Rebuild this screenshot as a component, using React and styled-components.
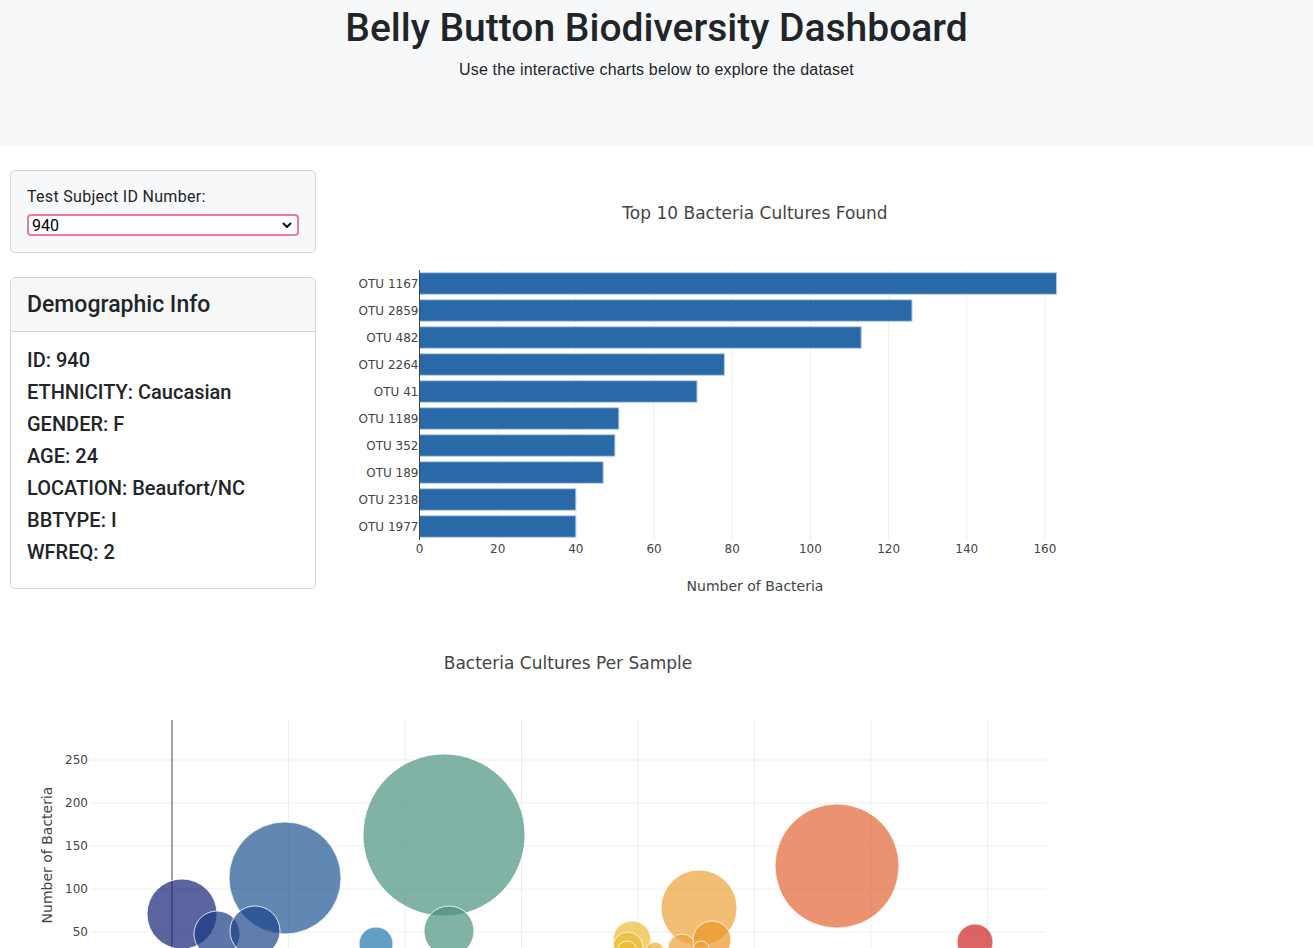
import React from 'react';
import styled, { createGlobalStyle } from 'styled-components';

const GlobalStyle = createGlobalStyle`
  * { box-sizing: border-box; }
  body {
    margin: 0;
    background: #fff;
    color: #212529;
    font-family: "Liberation Sans", Arial, sans-serif;
  }
`;

const headingFont = `Roboto, "Liberation Sans", Arial, sans-serif`;

const Jumbotron = styled.header`
  background: #f7f8f9;
  text-align: center;
  padding: 4px 0 48px;
`;

const Title = styled.h1`
  margin: 0 0 6px;
  font-family: ${headingFont};
  font-size: 39px;
  font-weight: 500;
  line-height: 48px;
  color: #212529;
`;

const Lead = styled.p`
  margin: 0 0 16px;
  font-size: 16px;
  line-height: 24px;
  letter-spacing: 0.18px;
`;

const Main = styled.main`
  padding: 24px 10px 0;
`;

const TopRow = styled.div`
  display: grid;
  grid-template-columns: 306px 830px;
  column-gap: 24px;
  align-items: start;
`;

const Sidebar = styled.div`
  display: flex;
  flex-direction: column;
  gap: 24px;
`;

const Well = styled.div`
  background: #f7f8f9;
  border: 1px solid #d4d4d4;
  border-radius: 5px;
  padding: 14px 16px 16px;
`;

const Label = styled.label`
  display: block;
  font-family: ${headingFont};
  font-size: 16px;
  line-height: 24px;
  letter-spacing: 0.3px;
  margin-bottom: 5px;
`;

const SelectWrap = styled.div`
  position: relative;
  width: 272px;
`;

const Select = styled.select`
  appearance: none;
  width: 100%;
  height: 22px;
  border: 2px solid #eb7aa6;
  border-radius: 4px;
  background: #fff;
  padding: 0 3px;
  font-family: ${headingFont};
  font-size: 16px;
  color: #000;
  outline: none;
`;

const Chevron = styled.svg`
  position: absolute;
  right: 7px;
  top: 8px;
  pointer-events: none;
`;

const Card = styled.div`
  border: 1px solid #d4d4d4;
  border-radius: 5px;
  overflow: hidden;
`;

const CardHeader = styled.div`
  background: #f7f7f7;
  border-bottom: 1px solid #d4d4d4;
  padding: 12px 16px;
  font-family: ${headingFont};
  font-size: 23px;
  font-weight: 500;
  line-height: 29px;
`;

const CardBody = styled.div`
  padding: 16px;
`;

const InfoLine = styled.h5`
  margin: 0 0 8px;
  font-family: ${headingFont};
  font-size: 20px;
  font-weight: 500;
  line-height: 24px;
`;

const ChartBox = styled.div`
  width: ${p => p.$w}px;
  height: ${p => p.$h}px;
`;

const ChartSvg = styled.svg`
  display: block;
  font-family: "DejaVu Sans", Verdana, sans-serif;
`;

const bars = [
  ['OTU 1167', 163],
  ['OTU 2859', 126],
  ['OTU 482', 113],
  ['OTU 2264', 78],
  ['OTU 41', 71],
  ['OTU 1189', 51],
  ['OTU 352', 50],
  ['OTU 189', 47],
  ['OTU 2318', 40],
  ['OTU 1977', 40],
];

const BarChart = () => {
  const x0 = 79.5;
  const k = 3.909;
  const top = 100;
  const band = 27;
  const ticks = [0, 20, 40, 60, 80, 100, 120, 140, 160];
  return (
    <ChartBox $w={830} $h={450}>
      <ChartSvg width="830" height="450">
        {ticks.slice(1).map(t => (
          <line key={t} x1={x0 + t * k} x2={x0 + t * k} y1={100} y2={370} stroke="#eee" />
        ))}
        {bars.map(([name, v], i) => (
          <rect
            key={name}
            x={x0}
            y={top + band * i + 2.7}
            width={v * k}
            height={21.6}
            fill="#2a69a8"
            stroke="#bcd1e8"
            strokeWidth="1"
          />
        ))}
        <line x1={x0} x2={x0} y1={100} y2={370} stroke="#444" />
        {bars.map(([name], i) => (
          <text key={name} x={78.5} y={top + band * i + 18} fontSize="12" fill="#444" textAnchor="end">
            {name}
          </text>
        ))}
        {ticks.map(t => (
          <text key={t} x={x0 + t * k} y={383} fontSize="12" fill="#444" textAnchor="middle">
            {t}
          </text>
        ))}
        <text x={415} y={49} fontSize="17" fill="#444" textAnchor="middle">
          Top 10 Bacteria Cultures Found
        </text>
        <text x={415} y={421} fontSize="14" fill="#444" textAnchor="middle">
          Number of Bacteria
        </text>
      </ChartSvg>
    </ChartBox>
  );
};

// bubbles in page coordinates: cx, cy, r, colour
const bubbles = [
  [444, 835, 81, 'rgba(74,146,128,0.7)'],
  [837, 866, 62, 'rgba(226,101,51,0.7)'],
  [285, 878, 56, 'rgba(28,85,146,0.7)'],
  [699, 908, 38, 'rgba(237,162,57,0.7)'],
  [182, 914, 35, 'rgba(21,34,118,0.7)'],
  [217, 934, 23, 'rgba(26,58,132,0.7)'],
  [255, 931, 25, 'rgba(28,70,140,0.7)'],
  [376, 944, 17, 'rgba(31,119,176,0.7)'],
  [449, 931, 25, 'rgba(74,146,128,0.7)'],
  [632, 940, 19, 'rgba(234,188,51,0.7)'],
  [628, 947, 15, 'rgba(234,188,51,0.7)'],
  [627, 951, 10, 'rgba(234,188,51,0.7)'],
  [655, 951, 9, 'rgba(237,175,55,0.7)'],
  [682, 948, 14, 'rgba(237,162,57,0.7)'],
  [712, 940, 19, 'rgba(237,150,40,0.7)'],
  [701, 949, 8, 'rgba(237,162,57,0.7)'],
  [975, 942, 18, 'rgba(206,34,36,0.7)'],
];

const BubbleChart = () => {
  const ox = 10;
  const oy = 620;
  const xAt = v => 172 + v * (116.5 / 500) - ox;
  const yAt = v => 975 - v * 0.86 - oy;
  const xt = [500, 1000, 1500, 2000, 2500, 3000, 3500];
  const yt = [50, 100, 150, 200, 250];
  return (
    <ChartBox $w={1116} $h={450}>
      <ChartSvg width="1116" height="450">
        <defs>
          <clipPath id="bubbleclip">
            <rect x="80" y="100" width="956" height="270" />
          </clipPath>
        </defs>
        {xt.map(t => (
          <line key={t} x1={xAt(t)} x2={xAt(t)} y1={100} y2={370} stroke="#eee" />
        ))}
        {yt.map(t => (
          <line key={t} x1={80} x2={1036} y1={yAt(t)} y2={yAt(t)} stroke="#eee" />
        ))}
        <line x1={xAt(0)} x2={xAt(0)} y1={100} y2={370} stroke="#444" />
        <line x1={80} x2={1036} y1={yAt(0)} y2={yAt(0)} stroke="#444" />
        <g clipPath="url(#bubbleclip)">
          {bubbles.map(([cx, cy, r, c], i) => (
            <circle key={i} cx={cx - ox} cy={cy - oy} r={r} fill={c} stroke="rgba(255,255,255,0.8)" strokeWidth="1" />
          ))}
        </g>
        {[0, ...yt].map(t => (
          <text key={t} x={78} y={yAt(t) + 4} fontSize="12" fill="#444" textAnchor="end">
            {t}
          </text>
        ))}
        {[0, ...xt].map(t => (
          <text key={t} x={xAt(t)} y={388} fontSize="12" fill="#444" textAnchor="middle">
            {t}
          </text>
        ))}
        <text x={558} y={49} fontSize="17" fill="#444" textAnchor="middle">
          Bacteria Cultures Per Sample
        </text>
        <text x={558} y={421} fontSize="14" fill="#444" textAnchor="middle">
          OTU ID
        </text>
        <text
          x={42}
          y={235}
          fontSize="14"
          fill="#444"
          textAnchor="middle"
          transform="rotate(-90 42 235)"
        >
          Number of Bacteria
        </text>
      </ChartSvg>
    </ChartBox>
  );
};

const info = [
  ['ID', '940'],
  ['ETHNICITY', 'Caucasian'],
  ['GENDER', 'F'],
  ['AGE', '24'],
  ['LOCATION', 'Beaufort/NC'],
  ['BBTYPE', 'I'],
  ['WFREQ', '2'],
];

const App = () => (
  <>
    <GlobalStyle />
    <Jumbotron>
      <Title>Belly Button Biodiversity Dashboard</Title>
      <Lead>Use the interactive charts below to explore the dataset</Lead>
    </Jumbotron>
    <Main>
      <TopRow>
        <Sidebar>
          <Well>
            <Label htmlFor="selDataset">Test Subject ID Number:</Label>
            <SelectWrap>
              <Select id="selDataset" defaultValue="940">
                <option>940</option>
                <option>941</option>
                <option>943</option>
              </Select>
              <Chevron width="10" height="7" viewBox="0 0 10 7">
                <polyline points="1.5,1.5 5,5 8.5,1.5" fill="none" stroke="#111" strokeWidth="2" strokeLinecap="round" strokeLinejoin="round" />
              </Chevron>
            </SelectWrap>
          </Well>
          <Card>
            <CardHeader>Demographic Info</CardHeader>
            <CardBody>
              {info.map(([k, v]) => (
                <InfoLine key={k}>{k}: {v}</InfoLine>
              ))}
            </CardBody>
          </Card>
        </Sidebar>
        <BarChart />
      </TopRow>
      <BubbleChart />
    </Main>
  </>
);

export default App;
